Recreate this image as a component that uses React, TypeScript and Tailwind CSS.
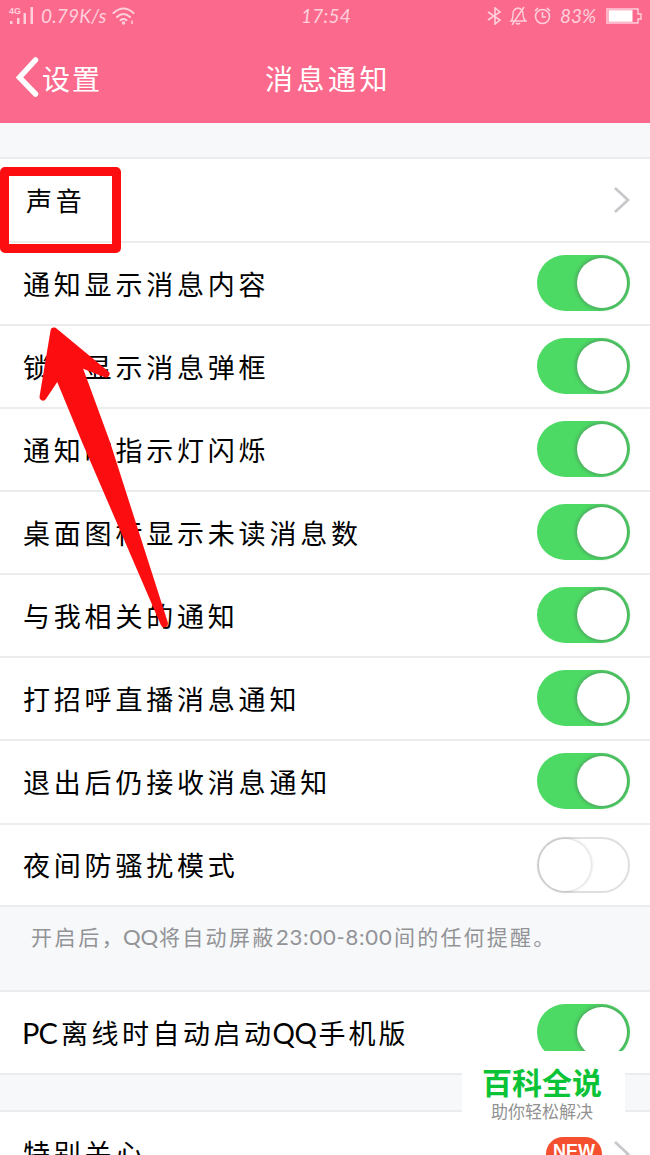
import React from "react";

function Toggle({ on = true }: { on?: boolean }) {
  return on ? (
    <span className="relative -top-px flex h-14 w-[93px] shrink-0 items-center justify-end rounded-full bg-[#4cd964] pr-[3px]">
      <span className="size-[50px] rounded-full bg-white shadow-[0_0_3px_2px_rgba(80,100,90,0.35)]" />
    </span>
  ) : (
    <span className="relative flex h-14 w-[93px] shrink-0 items-center rounded-full border-2 border-[#dfdfdf] bg-white">
      <span className="size-[52px] rounded-full bg-white shadow-[0_0_3px_1px_rgba(0,0,0,0.16)]" />
    </span>
  );
}

function Chevron() {
  return (
    <svg className="h-7 w-[17px] shrink-0" viewBox="0 0 17 28" fill="none" stroke="#c7c7cc" strokeWidth="2.8">
      <path d="M2 2 15 14 2 26" />
    </svg>
  );
}

function Row({ children, right, height = "h-[83px]" }: { children: React.ReactNode; right: React.ReactNode; height?: string }) {
  return (
    <div className={`flex shrink-0 items-center justify-between border-b-2 border-[#ebecee] bg-white pr-5 pl-[23px] ${height}`}>
      <span className="relative top-px text-[27px] leading-10 tracking-[3.8px] whitespace-nowrap">{children}</span>
      {right}
    </div>
  );
}

function StatusBar() {
  return (
    <div className="flex h-8 items-center justify-between pr-2 pl-2.5 font-['Lato','Noto_Sans_CJK_SC',sans-serif] text-[19px] text-[#ffd0dc]">
      <div className="flex w-[210px] items-center">
        <svg className="h-[18px] w-6 overflow-visible" viewBox="0 0 24 18" fill="#ffd0dc">
          <rect x="0" y="14" width="2.5" height="3" />
          <rect x="7" y="11" width="2.5" height="6" />
          <rect x="13.5" y="6" width="2.5" height="11" />
          <rect x="20.5" y="0" width="2.5" height="17" />
          <text x="-1" y="7" fontSize="9" fontWeight="700" fontFamily="Liberation Sans">4G</text>
        </svg>
        <span className="ml-[7px] w-[68px] tracking-[0.2px] whitespace-nowrap italic">0.79K/s</span>
        <svg className="ml-[3px] h-[18px] w-6" viewBox="0 0 24 18" fill="none" stroke="#ffd0dc" strokeWidth="2" strokeLinecap="round">
          <path d="M1.5 6Q11.5-3 21.5 6M5 10Q11.5 4 18 10M8.5 13.2Q11.5 11 14.5 13.2" />
          <circle cx="11.5" cy="16" r=".8" />
          <path d="M20 14v2.5" strokeWidth="1.5" />
        </svg>
      </div>
      <span className="tracking-[0.2px] italic">17:54</span>
      <div className="flex w-[210px] items-center justify-end">
        <svg className="h-[18px] w-4" viewBox="0 0 16 18" fill="none" stroke="#ffd0dc" strokeWidth="1.6">
          <path d="M1 5 13 13 8 17V1l5 4L1 13" />
        </svg>
        <svg className="ml-1.5 h-5 w-[18px]" viewBox="0 0 18 20" fill="none" stroke="#ffd0dc" strokeWidth="1.4">
          <path d="M2 15Q4 13 4 8Q4 3 9 2Q14 3 14 8Q14 13 17 15ZM7 17Q9 19 11 17M15 1 3 19" />
        </svg>
        <svg className="ml-[7px] h-[18px] w-[17px]" viewBox="0 0 17 18" fill="none" stroke="#ffd0dc" strokeWidth="1.6">
          <circle cx="8.5" cy="9.5" r="7" />
          <path d="M8.5 5v5H12M1 4 4 1M16 4 13 1" />
        </svg>
        <span className="ml-[9px] w-[38px] whitespace-nowrap italic">83%</span>
        <svg className="ml-[8px] h-[18px] w-9" viewBox="0 0 36 18" fill="none" stroke="#ffd0dc" strokeWidth="1.4">
          <path d="M1 2h31v5h3v5h-3v4H1Z" />
          <rect x="2.5" y="3.2" width="24" height="11.6" fill="#fff" stroke="none" />
        </svg>
      </div>
    </div>
  );
}

const switches = [
  "通知显示消息内容",
  "锁屏显示消息弹框",
  "通知时指示灯闪烁",
  "桌面图标显示未读消息数",
  "与我相关的通知",
  "打招呼直播消息通知",
];

export default function App() {
  return (
    <div className="relative flex h-[1155px] w-[650px] flex-col overflow-hidden bg-[#f7f8fa] font-['Lato','Noto_Sans_CJK_SC',sans-serif] text-black">
      <header className="h-[123px] shrink-0 bg-[#fb6a8d] text-white">
        <StatusBar />
        <div className="grid h-[91px] grid-cols-3 items-center pb-0.5 text-[28px]">
          <div className="flex items-center pl-[14px]">
            <svg className="h-[42px] w-[26px]" viewBox="0 0 26 42" fill="none" stroke="#fff" strokeWidth="5.5" strokeLinecap="round" strokeLinejoin="miter">
              <path d="M21.5 4 5.5 21.5 21.5 38" />
            </svg>
            <span className="relative top-0.5 ml-[2px] tracking-[2px]">设置</span>
          </div>
          <span className="relative top-0.5 left-[3px] text-center tracking-[3.5px] whitespace-nowrap">消息通知</span>
          <span />
        </div>
      </header>

      <div className="h-9 shrink-0 border-b-2 border-[#ebecee]" />
      <Row height="h-[84px]" right={<Chevron />}>
        <span className="pl-[3px] text-[26px]">声音</span>
      </Row>
      {switches.map((label) => (
        <Row key={label} right={<Toggle />}>{label}</Row>
      ))}
      <Row height="h-[84px]" right={<Toggle />}>退出后仍接收消息通知</Row>
      <Row height="h-[82px]" right={<Toggle on={false} />}>夜间防骚扰模式</Row>

      <div className="flex h-[85px] shrink-0 border-b-2 border-[#ebecee] pt-[15px] pl-[31px] text-[21px] leading-[30px] whitespace-nowrap text-[#929396]">
        <span className="w-[92px] tracking-[2.6px]">开启后，</span>
        <span className="w-[36px] text-[22px]">QQ</span>
        <span className="w-[117px] tracking-[2.3px]">将自动屏蔽</span>
        <span className="w-[118px] text-[22px] tracking-[0.8px]">23:00-8:00</span>
        <span className="tracking-[2.2px]">间的任何提醒。</span>
      </div>

      <Row right={<Toggle />}>
        <span className="-ml-px inline-block w-[39px] text-[29px] tracking-[-1px]">PC</span>
        <span className="tracking-[3.5px]">离线时自动启动</span>
        <span className="-ml-[2px] inline-block w-[46px] text-[28px] tracking-[-0.5px]">QQ</span>
        <span className="tracking-[3px]">手机版</span>
      </Row>
      <div className="h-[37px] shrink-0 border-b-2 border-[#ebecee]" />
      <Row
        right={
          <span className="relative top-px flex items-center gap-[11px]">
            <span className="flex h-[34px] w-14 items-center justify-center rounded-full bg-[#f4502f] pb-1 font-['Liberation_Sans',sans-serif] text-[18px] font-bold text-white">NEW</span>
            <Chevron />
          </span>
        }
      >
        特别关心
      </Row>

      <div className="absolute top-[167px] left-0 h-[86px] w-[121px] rounded-[5px] border-[9px] border-[#fc0d10]" />
      <svg className="absolute top-[325px] left-9 h-[306px] w-[134px]" viewBox="0 0 134 306" fill="#fc0d10">
        <path d="M18 6 70 49 42 38 23 48 7 72Z" stroke="#fc0d10" strokeWidth="7" strokeLinejoin="round" />
        <path d="M24 24 42 32 48 46 74 117 132 298Q132 302 128.5 302.5Q125.500 302.500 124 298L46 117 20 54Z" />
      </svg>

      <div className="absolute top-[1051px] left-[462px] flex h-[78px] w-[163px] flex-col items-center bg-white pt-[12px] pr-[3px]">
        <span className="text-[30px] leading-[38px] font-bold whitespace-nowrap text-[#0ac337]">百科全说</span>
        <span className="mt-px text-[17px] leading-5 whitespace-nowrap text-[#929292]">助你轻松解决</span>
      </div>
    </div>
  );
}
